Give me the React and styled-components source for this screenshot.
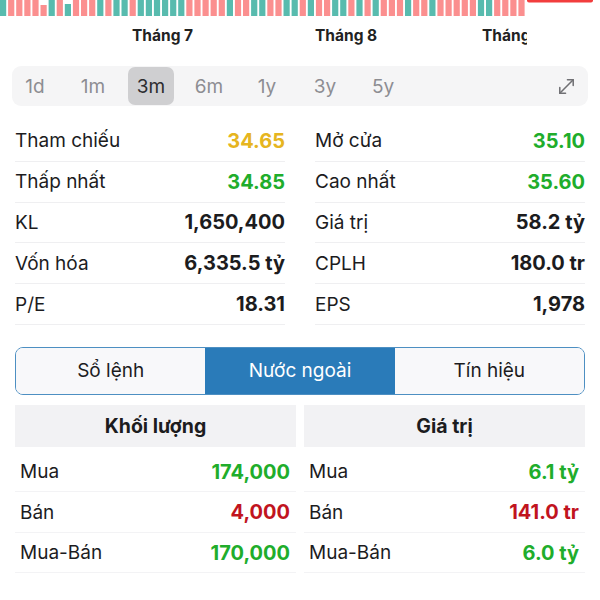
import React from "react";
import styled, { createGlobalStyle } from "styled-components";
import { MoveDiagonal } from "lucide-react";

const GlobalStyle = createGlobalStyle`
  body {
    margin: 0;
    background: #ffffff;
    font-family: Inter, "Noto Sans", "Liberation Sans", sans-serif;
    color: #1c1c1e;
  }
`;

const GREEN = "#20ad2b";
const YELLOW = "#e6b520";
const RED = "#c1141e";

// t = teal, r = red, uppercase = short bar
const BARS = "trrrrRtrTrrrtrttrttttttrrrrrtrrttrrttrtrrttrtrtrrrtrrtrrrrrttrrrr";

const Page = styled.div`
  width: 600px;
  height: 600px;
  overflow: hidden;
`;

const VolumeChart = styled.svg`
  display: block;
`;

const Axis = styled.div`
  position: relative;
  width: 527px;
  height: 38px;
  overflow: hidden;
`;

const AxisLabel = styled.span`
  position: absolute;
  top: 9px;
  font-size: 15.5px;
  font-weight: 700;
  color: #222;
  white-space: nowrap;
`;

const PeriodBar = styled.div`
  margin: 11px 12px 0;
  height: 40px;
  background: #f5f5f6;
  border-radius: 9px;
  display: flex;
  align-items: center;
  gap: 12px;
  padding-right: 10px;
`;

const Period = styled.div`
  width: 46px;
  height: 38px;
  display: flex;
  align-items: center;
  justify-content: center;
  border-radius: 7px;
  font-size: 19px;
  color: ${(p) => (p.$active ? "#2c2c2e" : "#8d8d92")};
  background: ${(p) => (p.$active ? "#cfcfd1" : "transparent")};
`;

const ExpandButton = styled.div`
  margin-left: auto;
  display: flex;
  color: #707074;
`;

const StatsGrid = styled.div`
  margin-top: 15px;
  padding: 0 15px;
  display: grid;
  grid-template-columns: 1fr 1fr;
  column-gap: 30px;
`;

const StatRow = styled.div`
  height: 40.8px;
  box-sizing: border-box;
  border-bottom: 1px solid #efeff1;
  display: flex;
  align-items: center;
  justify-content: space-between;
  font-size: 19px;
`;

const Value = styled.span`
  font-weight: 700;
  font-size: 20px;
  color: ${(p) => p.$color || "#1c1c1e"};
`;

const Tabs = styled.div`
  margin: 22px 15px 0;
  height: 48px;
  box-sizing: border-box;
  border: 1.5px solid #4d8fc2;
  border-radius: 8px;
  overflow: hidden;
  display: grid;
  grid-template-columns: repeat(3, 1fr);
`;

const Tab = styled.div`
  display: flex;
  align-items: center;
  justify-content: center;
  font-size: 19px;
  color: ${(p) => (p.$active ? "#ffffff" : "#1c1c1e")};
  background: ${(p) => (p.$active ? "#2a7bb9" : "#f8f8fa")};
`;

const ForeignGrid = styled.div`
  margin: 10px 15px 0;
  display: grid;
  grid-template-columns: 1fr 1fr;
  column-gap: 8px;
`;

const ForeignCol = styled.div`
  display: flex;
  flex-direction: column;
`;

const ColHeader = styled.div`
  height: 42px;
  background: #f2f2f4;
  display: flex;
  align-items: center;
  justify-content: center;
  font-size: 19.5px;
  font-weight: 700;
  margin-bottom: 5px;
`;

const ForeignRow = styled(StatRow)`
  height: 40.5px;
  padding: 0 6px 0 5px;
  border-bottom-color: #f3f3f5;
`;

const stats = [
  [
    ["Tham chiếu", "34.65", YELLOW],
    ["Thấp nhất", "34.85", GREEN],
    ["KL", "1,650,400"],
    ["Vốn hóa", "6,335.5 tỷ"],
    ["P/E", "18.31"],
  ],
  [
    ["Mở cửa", "35.10", GREEN],
    ["Cao nhất", "35.60", GREEN],
    ["Giá trị", "58.2 tỷ"],
    ["CPLH", "180.0 tr"],
    ["EPS", "1,978"],
  ],
];

const foreign = [
  {
    title: "Khối lượng",
    rows: [
      ["Mua", "174,000", GREEN],
      ["Bán", "4,000", RED],
      ["Mua-Bán", "170,000", GREEN],
    ],
  },
  {
    title: "Giá trị",
    rows: [
      ["Mua", "6.1 tỷ", GREEN],
      ["Bán", "141.0 tr", RED],
      ["Mua-Bán", "6.0 tỷ", GREEN],
    ],
  },
];

const periods = ["1d", "1m", "3m", "6m", "1y", "3y", "5y"];

const App = () => {
  // stats grid is row-major, so interleave the two columns
  const statCells = [];
  for (let i = 0; i < 5; i++) {
    statCells.push(stats[0][i], stats[1][i]);
  }

  return (
    <Page>
      <GlobalStyle />
      <VolumeChart width="600" height="17" viewBox="0 0 600 17">
        {BARS.split("").map((c, i) => {
          const teal = c.toLowerCase() === "t";
          const short = c !== c.toLowerCase();
          const top = short ? (teal ? 4 : 5) : 0;
          return (
            <rect
              key={i}
              x={i * 8.1}
              y={top}
              width="6.2"
              height={16 - top}
              fill={teal ? "#58bbae" : "#fb8f8f"}
            />
          );
        })}
        <rect x="527" y="-4" width="66" height="6.5" rx="2" fill="#f23d3d" />
      </VolumeChart>

      <Axis>
        <AxisLabel style={{ left: 132 }}>Tháng 7</AxisLabel>
        <AxisLabel style={{ left: 315 }}>Tháng 8</AxisLabel>
        <AxisLabel style={{ left: 482 }}>Tháng 9</AxisLabel>
      </Axis>

      <PeriodBar>
        {periods.map((p) => (
          <Period key={p} $active={p === "3m"}>
            {p}
          </Period>
        ))}
        <ExpandButton>
          <MoveDiagonal size={23} strokeWidth={1.6} />
        </ExpandButton>
      </PeriodBar>

      <StatsGrid>
        {statCells.map(([label, value, color]) => (
          <StatRow key={label}>
            <span>{label}</span>
            <Value $color={color}>{value}</Value>
          </StatRow>
        ))}
      </StatsGrid>

      <Tabs>
        <Tab>Sổ lệnh</Tab>
        <Tab $active>Nước ngoài</Tab>
        <Tab>Tín hiệu</Tab>
      </Tabs>

      <ForeignGrid>
        {foreign.map((col) => (
          <ForeignCol key={col.title}>
            <ColHeader>{col.title}</ColHeader>
            {col.rows.map(([label, value, color]) => (
              <ForeignRow key={label}>
                <span>{label}</span>
                <Value $color={color}>{value}</Value>
              </ForeignRow>
            ))}
          </ForeignCol>
        ))}
      </ForeignGrid>
    </Page>
  );
};

export default App;
